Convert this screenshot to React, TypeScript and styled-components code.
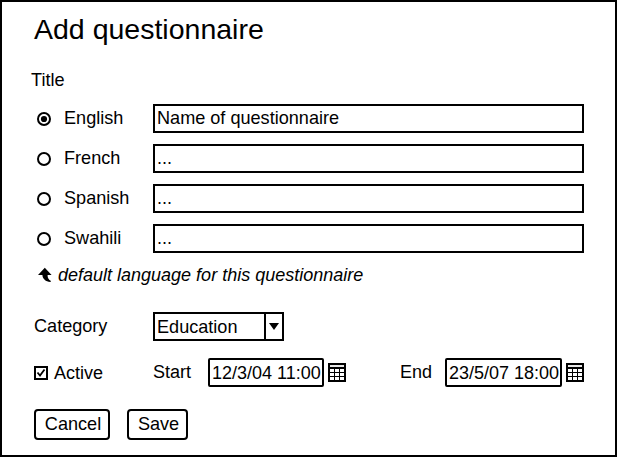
import React, { useState } from "react";
import styled, { createGlobalStyle } from "styled-components";

const GlobalStyle = createGlobalStyle`
  *, *::before, *::after { box-sizing: border-box; }
  body { margin: 0; background: #fff; }
`;

const Dialog = styled.main`
  width: 617px;
  height: 457px;
  padding: 11px 31px 0 29px;
  border: 2px solid #000;
  background: #fff;
  color: #000;
  font: 18.1px/20px "Liberation Sans", Arial, sans-serif;
  white-space: nowrap;
`;

const Heading = styled.h1`
  margin: 0 0 25px 3px;
  font-size: 28.5px;
  font-weight: 400;
  line-height: 32px;
`;

const SectionLabel = styled.div`
  height: 34px;
`;

const LanguageList = styled.div`
  display: grid;
  gap: 11px;
`;

const LanguageRow = styled.div`
  display: grid;
  grid-template-columns: 122px 431px;
  height: 29px;
`;

const LanguageChoice = styled.label`
  display: flex;
  gap: 13px;
  padding: 4px 0 0 6px;
`;

const RadioMark = styled.svg`
  display: block;
  width: 14px;
  height: 14px;
  margin-top: 4px;
`;

const Field = styled.div<{ $rounded?: boolean }>`
  height: 29px;
  padding: ${(p) => (p.$rounded ? 3 : 2)}px 0 0 2px;
  border: 2px solid #000;
  border-radius: ${(p) => (p.$rounded ? 2 : 0)}px;
`;

const Hint = styled.div`
  display: flex;
  gap: 6px;
  margin: 12px 0 0 7px;
  font-size: 18px;
  font-style: italic;
`;

const HintArrow = styled.svg`
  width: 14px;
  height: 16px;
  margin-top: 2px;
`;

const CategoryRow = styled.div`
  display: grid;
  grid-template-columns: 119px 131px;
  height: 29px;
  margin: 27px 0 0 3px;
`;

const Caption = styled.div`
  padding-top: 4px;
`;

const Select = styled.div`
  display: grid;
  grid-template-columns: 1fr 18px;
  border: 2px solid #000;
`;

const SelectValue = styled.div`
  padding: 3px 0 0 2px;
`;

const SelectArrow = styled.svg`
  width: 18px;
  height: 25px;
  border-left: 2px solid #000;
`;

const ScheduleRow = styled.div`
  display: grid;
  grid-template-columns: 119px 55px 116px 76px 45px 117px 22px;
  height: 29px;
  margin: 17px 0 0 3px;
  font-size: 18px;
`;

const ActiveChoice = styled.label`
  display: flex;
  gap: 6px;
  padding-top: 5px;
`;

const CheckMark = styled.svg`
  width: 14px;
  height: 14px;
  margin-top: 3px;
`;

const CalendarIcon = styled.svg`
  width: 18px;
  height: 19px;
  margin: 5px 0 0 4px;
`;

const Actions = styled.div`
  display: flex;
  gap: 17px;
  margin: 22px 0 0 3px;
`;

const ActionButton = styled.button<{ $width: number }>`
  width: ${(p) => p.$width}px;
  height: 31px;
  padding: 0 0 1px 2px;
  border: 2px solid #000;
  border-radius: 4px;
  background: #fff;
  color: #000;
  font: inherit;
`;

const languages = [
  { name: "English", title: "Name of questionnaire" },
  { name: "French", title: "..." },
  { name: "Spanish", title: "..." },
  { name: "Swahili", title: "..." },
];

function Calendar() {
  return (
    <CalendarIcon viewBox="0 0 18 19" shapeRendering="crispEdges">
      <rect width="18" height="19" rx="1" fill="#000" />
      <rect x="2" y="2" width="14" height="2" fill="#e8e8e8" />
      {[6, 10, 14].map((y) =>
        [2, 7, 12].map((x) => (
          <rect key={`${x}-${y}`} x={x} y={y} width="4" height="3" fill="#fff" />
        ))
      )}
    </CalendarIcon>
  );
}

export default function App() {
  const [selected, setSelected] = useState("English");
  return (
    <>
      <GlobalStyle />
      <Dialog>
        <Heading>Add questionnaire</Heading>
        <SectionLabel>Title</SectionLabel>
        <LanguageList>
          {languages.map(({ name, title }) => (
            <LanguageRow key={name}>
              <LanguageChoice onClick={() => setSelected(name)}>
                <RadioMark viewBox="0 0 14 14">
                  <circle cx="7" cy="7" r="6" fill="#fff" stroke="#000" strokeWidth="2" />
                  {selected === name && <circle cx="7" cy="7" r="3.1" />}
                </RadioMark>
                {name}
              </LanguageChoice>
              <Field>{title}</Field>
            </LanguageRow>
          ))}
        </LanguageList>
        <Hint>
          <HintArrow viewBox="0 0 14 16">
            <path d="M6.8 0.8 L13.6 8 H9.6 C9.4 10.8 10.6 12.8 13 14 L12.4 15 C7.6 14.6 4.6 12 4.4 8 H0 Z" />
          </HintArrow>
          default language for this questionnaire
        </Hint>
        <CategoryRow>
          <Caption>Category</Caption>
          <Select>
            <SelectValue>Education</SelectValue>
            <SelectArrow viewBox="0 0 16 25">
              <path d="M3 9 H13 L8 16 Z" />
            </SelectArrow>
          </Select>
        </CategoryRow>
        <ScheduleRow>
          <ActiveChoice>
            <CheckMark viewBox="0 0 14 14">
              <rect x="1" y="1" width="12" height="12" fill="#fff" stroke="#000" strokeWidth="2" />
              <path d="M3.5 6.5 L6 9.5 L10.5 3.5" fill="none" stroke="#000" strokeWidth="1.8" />
            </CheckMark>
            Active
          </ActiveChoice>
          <Caption>Start</Caption>
          <Field $rounded>12/3/04 11:00</Field>
          <Calendar />
          <Caption>End</Caption>
          <Field $rounded>23/5/07 18:00</Field>
          <Calendar />
        </ScheduleRow>
        <Actions>
          <ActionButton $width={76}>Cancel</ActionButton>
          <ActionButton $width={61}>Save</ActionButton>
        </Actions>
      </Dialog>
    </>
  );
}
